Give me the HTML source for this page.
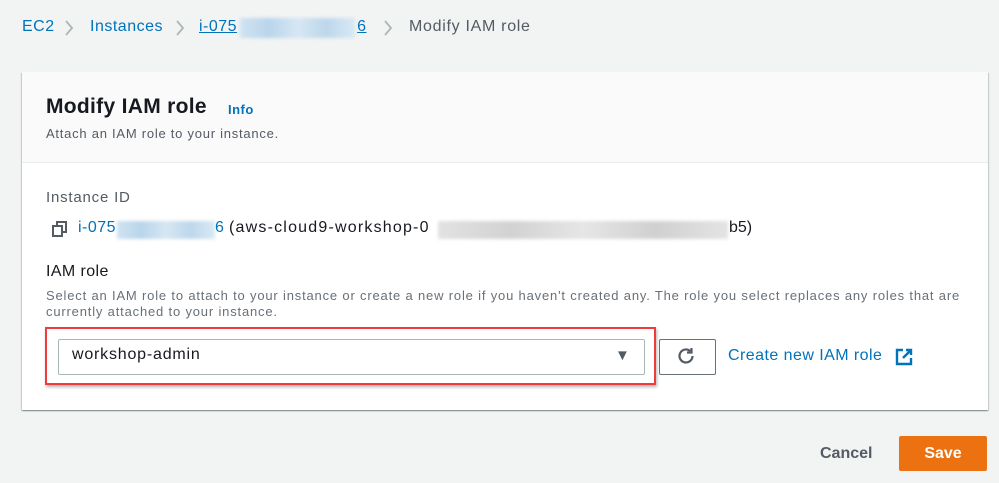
<!DOCTYPE html>
<html><head><meta charset="utf-8"><style>
body{margin:0;width:999px;height:483px;background:#f2f3f3;font-family:"Liberation Sans",sans-serif;position:relative;overflow:hidden;color:#16191f}
.a{position:absolute;white-space:nowrap}
.blue{color:#0073bb}
.blur{position:absolute;background:linear-gradient(90deg,#cfe3f2,#b9d5ea,#d6e7f3,#bdd7eb,#d9e9f4);filter:blur(1.5px)}
.blurg{position:absolute;background:linear-gradient(90deg,#e2e2e2,#d2d2d2,#e6e6e6,#d0d0d0,#e4e4e4);filter:blur(1.5px)}
.bc{font-size:16px;top:18px;letter-spacing:.5px}
</style></head><body>
<div class="a blue bc" style="left:22px">EC2</div>
<svg class="a" style="left:64px;top:19px" width="10" height="18" viewBox="0 0 10 18" fill="none" stroke="#aab7b8" stroke-width="1.8"><path d="M2 2l6 7-6 7"/></svg>
<div class="a blue bc" style="left:90px">Instances</div>
<svg class="a" style="left:175px;top:19px" width="10" height="18" viewBox="0 0 10 18" fill="none" stroke="#aab7b8" stroke-width="1.8"><path d="M2 2l6 7-6 7"/></svg>
<div class="a blue bc" style="left:199px;text-decoration:underline">i-075<span style="display:inline-block;width:120px"></span>6</div>
<div class="blur" style="left:240px;top:18px;width:115px;height:20px"></div>
<svg class="a" style="left:383px;top:19px" width="10" height="18" viewBox="0 0 10 18" fill="none" stroke="#aab7b8" stroke-width="1.8"><path d="M2 2l6 7-6 7"/></svg>
<div class="a bc" style="left:409px;color:#545b64;letter-spacing:.7px">Modify IAM role</div>

<div class="a" style="left:22px;top:72px;width:966px;height:338px;background:#fff;box-shadow:0 1px 1px rgba(0,28,36,.3),1px 1px 1px rgba(0,28,36,.15),-1px 1px 1px rgba(0,28,36,.15)"></div>
<div class="a" style="left:22px;top:72px;width:966px;height:90px;background:#fafafa;border-bottom:1px solid #eaeded"></div>
<div class="a" style="left:46px;top:95px;font-size:21px;font-weight:bold;letter-spacing:.3px">Modify IAM role</div>
<div class="a blue" style="left:228px;top:102px;font-size:13px;font-weight:bold;letter-spacing:.5px">Info</div>
<div class="a" style="left:46px;top:126px;font-size:13px;color:#545b64;letter-spacing:.75px">Attach an IAM role to your instance.</div>

<div class="a" style="left:46px;top:189px;font-size:15px;color:#545b64;letter-spacing:.8px">Instance ID</div>
<svg class="a" style="left:52px;top:221px" width="16" height="16" viewBox="0 0 16 16" fill="none" stroke="#545b64" stroke-width="2"><rect x="1" y="5" width="9" height="10"/><path d="M5 5V1h9v10h-4"/></svg>
<div class="a blue" style="left:78px;top:219px;font-size:16px;letter-spacing:.5px">i-075</div>
<div class="blur" style="left:117px;top:221px;width:98px;height:18px"></div>
<div class="a blue" style="left:215px;top:219px;font-size:16px">6</div>
<div class="a" style="left:229px;top:219px;font-size:16px;letter-spacing:1.2px">(aws-cloud9-workshop-0</div>
<div class="blurg" style="left:438px;top:221px;width:290px;height:18px"></div>
<div class="a" style="left:729px;top:219px;font-size:16px">b5)</div>

<div class="a" style="left:46px;top:263px;font-size:16px;letter-spacing:.4px">IAM role</div>
<div class="a" style="left:46px;top:288px;font-size:13px;color:#687078;line-height:16px;letter-spacing:.82px">Select an IAM role to attach to your instance or create a new role if you haven't created any. The role you select replaces any roles that are<br>currently attached to your instance.</div>

<div class="a" style="left:45px;top:327px;width:607px;height:54px;border:2px solid #ef3b3b;box-shadow:1px 2px 3px rgba(0,0,0,.3)"></div>
<div class="a" style="left:58px;top:339px;width:585px;height:34px;border:1px solid #aab7b8;border-radius:2px;background:#fff"></div>
<div class="a" style="left:72px;top:346px;font-size:16px;letter-spacing:.8px">workshop-admin</div>
<div class="a" style="left:615px;top:347px;font-size:15px;color:#545b64">▼</div>
<div class="a" style="left:659px;top:339px;width:55px;height:34px;border:1px solid #687078;border-radius:2px;background:#fff"></div>
<svg class="a" style="left:676px;top:346px" width="20" height="20" viewBox="0 0 20 20" fill="none" stroke="#545b64" stroke-width="2.2"><path d="M16.5 10a6.5 6.5 0 1 1-2.2-4.9"/><path d="M15.5 2v4.5H11"/></svg>
<div class="a blue" style="left:728px;top:347px;font-size:16px;letter-spacing:.45px">Create new IAM role</div>
<svg class="a" style="left:895px;top:348px" width="18" height="18" viewBox="0 0 18 18" fill="none" stroke="#0073bb" stroke-width="2.4"><path d="M8 2H2v14h14v-6"/><path d="M11 2h5v5M16 2 8 10"/></svg>

<div class="a" style="left:820px;top:445px;font-size:16px;font-weight:bold;color:#545b64">Cancel</div>
<div class="a" style="left:899px;top:436px;width:88px;height:35px;background:#ec7211;border-radius:2px;color:#fff;font-weight:bold;font-size:16px;text-align:center;line-height:35px">Save</div>
</body></html>
